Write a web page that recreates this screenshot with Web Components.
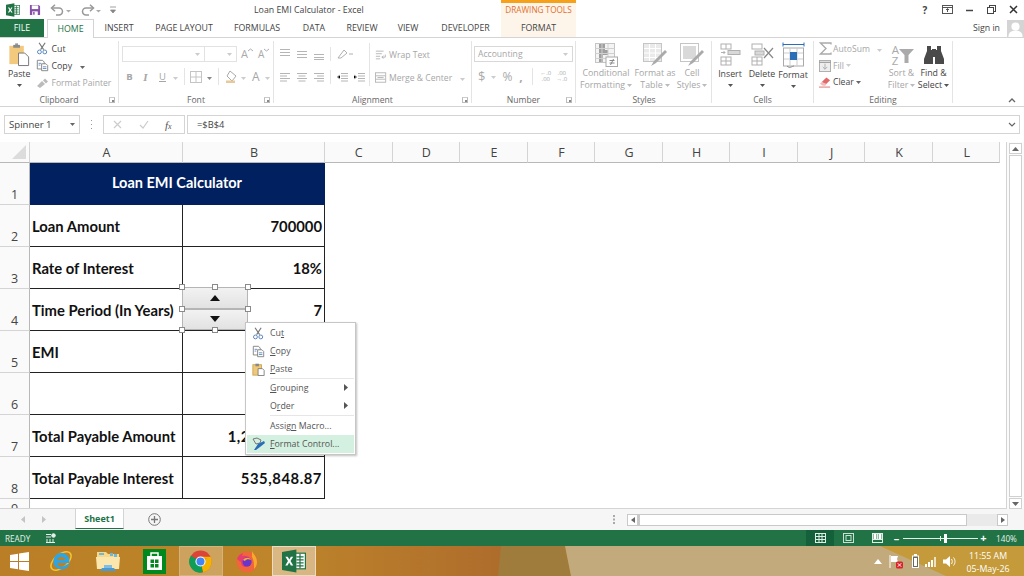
<!DOCTYPE html>
<html>
<head>
<meta charset="utf-8">
<title>Loan EMI Calculator - Excel</title>
<style>
  html, body { margin: 0; padding: 0; height: 576px; overflow: hidden; background: #fff; }
  body { display: flex; flex-direction: column; width: 1024px; font-family: "Open Sans", "Noto Sans", sans-serif; color: #444; }
</style>
</head>
<body>
<xl-titlebar></xl-titlebar>
<xl-tabs></xl-tabs>
<xl-ribbon></xl-ribbon>
<xl-formula-bar></xl-formula-bar>
<xl-sheet></xl-sheet>
<xl-sheet-tabs></xl-sheet-tabs>
<xl-status></xl-status>
<xl-taskbar></xl-taskbar>

<script>
const excelLogo = (w, h) => `<svg width="${w}" height="${h}" viewBox="0 0 20 20"><rect x="9" y="3.500" width="10.500" height="13" fill="#fff" stroke="#217346"/><path d="M12 6.500h6M12 9h6M12 11.500h6M12 14h6M15 4v12" stroke="#217346"/><path d="M0 2.500 12 .5v19L0 17.500z" fill="#217346"/><path d="M2.800 6.500h2l1.300 2.300L7.400 6.500h1.900L7.100 10l2.300 3.700H7.400L6 11.300l-1.400 2.400H2.700L5 10z" fill="#fff"/></svg>`;
const scissors = (c = '#5a87c0') => `<svg width="13" height="15" viewBox="0 0 17 17" fill="none"><path d="M4 1l6 9M12 1L6 10" stroke="#777" stroke-width="1.500"/><circle cx="4.500" cy="13" r="2.500" stroke="${c}" stroke-width="1.300"/><circle cx="11.500" cy="13" r="2.500" stroke="${c}" stroke-width="1.300"/></svg>`;
const copyIcon = `<svg width="13" height="13" viewBox="0 0 15 15" fill="#fff" stroke="#7a7a7a"><path d="M1.500 1.500h6l2 2v8h-8z"/><path d="M6.500 5.500h5l2 2v6h-7z"/><path d="M3 5h3M3 7h2M8 9h4M8 11h4" stroke="#5a87c0"/></svg>`;
const pasteSmall = `<svg width="13" height="13" viewBox="0 0 15 15"><rect x="1" y="2" width="10" height="12" fill="#f0c87a" stroke="#c9a256"/><rect x="4" y=".8" width="4" height="3" fill="#888"/><path d="M7 6.500h5l2 2v6H7z" fill="#fff" stroke="#777"/></svg>`;
const caret = (c = '#666') => `<svg width="5" height="3" viewBox="0 0 5 3"><path d="M0 0h5L2.500 3z" fill="${c}"/></svg>`;

class XlTitlebar extends HTMLElement {
  constructor() {
    super();
    this.attachShadow({mode: 'open'});
    this.shadowRoot.innerHTML = `
      <style>
        :host { display: flex; flex: none; height: 19px; align-items: center; font-size: 8.800px; color: #444; }
        .qat { display: flex; align-items: center; width: 254px; flex: none; padding-left: 6px; box-sizing: border-box; gap: 9px; }
        .title { width: 247px; flex: none; white-space: nowrap; }
        .band { width: 75px; flex: none; height: 19px; box-sizing: border-box; border-top: 3px solid #f6a11c; background: #fdf5ea; color: #e2702c; text-align: center; font-size: 8.200px; line-height: 14px; white-space: nowrap; }
        .win { margin-left: auto; display: flex; align-items: center; color: #444; }
        .win span { width: 22px; display: flex; justify-content: center; font-weight: 700; font-size: 10px; }
      </style>
      <div class="qat">
        ${excelLogo(14, 14)}
        <svg width="12" height="12" viewBox="0 0 13 13"><path d="M1 1h9.500L12 2.500V12H1z" fill="#8750a8"/><rect x="3" y="1.500" width="7" height="4" fill="#fff"/><rect x="3.500" y="8" width="6" height="4" fill="#fff"/><rect x="4.500" y="8.600" width="1.600" height="3" fill="#8750a8"/></svg>
        <svg width="24" height="12" viewBox="0 0 24 12" fill="none"><path d="M2 4h7a3.500 3.500 0 0 1 0 7H6" stroke="#999" stroke-width="1.500"/><path d="M5 .8 1.500 4 5 7.200" stroke="#999" stroke-width="1.500"/><path d="M16 6h5l-2.500 2.500z" fill="#aaa"/></svg>
        <svg style="margin-left:-3px" width="24" height="12" viewBox="0 0 24 12" fill="none"><path d="M13 4H6a3.500 3.500 0 0 0 0 7h3" stroke="#999" stroke-width="1.500"/><path d="M10 .8 13.500 4 10 7.200" stroke="#999" stroke-width="1.500"/><path d="M16 6h5l-2.500 2.500z" fill="#aaa"/></svg>
        <svg style="margin-left:-3px" width="6" height="8" viewBox="0 0 6 8"><path d="M0 1h6M.5 4h5l-2.500 3z" stroke="#888" fill="#888" stroke-width=".8"/></svg>
      </div>
      <div class="title">Loan EMI Calculator - Excel</div>
      <div class="band">DRAWING TOOLS</div>
      <div class="win">
        <span>?</span>
        <span><svg width="11" height="9" viewBox="0 0 11 9" fill="none" stroke="#555"><rect x=".5" y=".5" width="10" height="8"/><path d="M.5 2.500h10M5.500 7V4M4 5l1.500-1.500L7 5"/></svg></span>
        <span><svg width="9" height="9" viewBox="0 0 9 9"><path d="M1 5.500h7" stroke="#444" stroke-width="1.500"/></svg></span>
        <span><svg width="9" height="9" viewBox="0 0 9 9" fill="#fff" stroke="#444"><rect x="2.500" y=".5" width="6" height="6"/><rect x=".5" y="2.500" width="6" height="6"/></svg></span>
        <span><svg width="9" height="9" viewBox="0 0 9 9"><path d="M1 1l7 7M8 1 1 8" stroke="#333" stroke-width="1.500"/></svg></span>
      </div>`;
  }
}

class XlTabs extends HTMLElement {
  constructor() {
    super();
    this.attachShadow({mode: 'open'});
    const tabs = [['INSERT', 50], ['PAGE LAYOUT', 80], ['FORMULAS', 66], ['DATA', 48], ['REVIEW', 48], ['VIEW', 44], ['DEVELOPER', 71]];
    this.shadowRoot.innerHTML = `
      <style>
        :host { display: flex; flex: none; height: 18px; font-size: 8.800px; color: #444; align-items: stretch; }
        div { display: flex; align-items: center; justify-content: center; box-sizing: border-box; white-space: nowrap; }
        .file { width: 44px; background: #217346; color: #fff; margin-right: 3px; }
        .home { width: 47px; color: #217346; border: 1px solid #d4d4d4; border-bottom: 0; background: #fff; height: 19px; position: relative; z-index: 1; }
        .fmt { width: 75px; background: #fdf5ea; }
        .sign { margin-left: auto; gap: 7px; color: #444; }
      </style>
      <div class="file">FILE</div>
      <div class="home">HOME</div>
      ${tabs.map(([n, w]) => `<div style="width:${w}px">${n}</div>`).join('')}
      <div class="fmt">FORMAT</div>
      <div class="sign"><span style="font-size:8.800px">Sign in</span>
        <svg width="17" height="17" viewBox="0 0 18 18"><rect width="18" height="18" fill="#d4d4d4"/><circle cx="9" cy="7" r="4.300" fill="#fff"/><path d="M1.500 18c0-5 3-6.500 7.500-6.500S16.500 13 16.500 18z" fill="#fff"/></svg>
      </div>`;
  }
}

class XlGroup extends HTMLElement {
  constructor() {
    super();
    this.attachShadow({mode: 'open'});
    const launcher = this.hasAttribute('launcher');
    this.shadowRoot.innerHTML = `
      <style>
        :host { display: flex; flex-direction: column; flex: none; box-sizing: border-box; height: 62px; margin-top: 3px; border-right: 1px solid #e4e4e4; }
        .body { flex: none; height: 52px; margin-top: -2px; display: flex; }
        .label { flex: none; height: 12px; margin-top: 3px; display: flex; align-items: center; justify-content: center; position: relative; font-size: 8.600px; color: #666; }
        .launch { position: absolute; right: 3px; top: 3px; width: 6px; height: 6px; border: 1px solid #bbb; border-top-color: #ccc; box-sizing: border-box; }
        .launch::after { content: ''; position: absolute; right: 0; bottom: 0; width: 2px; height: 2px; background: #888; }
      </style>
      <div class="body"><slot></slot></div>
      <div class="label">${this.getAttribute('label')}${launcher ? '<span class="launch"></span>' : ''}</div>`;
  }
}

class XlBigButton extends HTMLElement {
  constructor() {
    super();
    this.attachShadow({mode: 'open'});
    const lines = (this.getAttribute('text') || '').split('|');
    const dim = this.hasAttribute('dim');
    this.shadowRoot.innerHTML = `
      <style>
        :host { display: flex; flex-direction: column; align-items: center; flex: none; font-size: 8.800px; line-height: 12px; color: ${dim ? '#a6a6a6' : '#444'}; white-space: nowrap; }
        .ico { height: 30px; box-sizing: border-box; padding-top: 3px; display: flex; align-items: center; justify-content: center; }
        .line { display: flex; align-items: center; gap: 2px; height: 12px; }
      </style>
      <div class="ico"><slot></slot></div>
      ${lines.map(l => `<div class="line">${l.replace('^', caret(dim ? '#bbb' : '#555'))}</div>`).join('')}`;
  }
}

class XlRibbon extends HTMLElement {
  constructor() {
    super();
    this.attachShadow({mode: 'open'});
    this.shadowRoot.innerHTML = `
      <style>
        :host { display: flex; flex: none; height: 70px; box-sizing: border-box; border-top: 1px solid #d4d4d4; border-bottom: 1px solid #d4d4d4; position: relative; font-size: 8.600px; color: #444; }
        .col { display: flex; flex-direction: column; }
        .row { display: flex; align-items: center; white-space: nowrap; gap: 4px; }
        .dim { color: #a6a6a6; }
        .box { height: 16px; border: 1px solid #e2e2e2; box-sizing: border-box; display: flex; align-items: center; justify-content: flex-end; padding: 0 4px; }
        .fg { font-size: 9.500px; font-weight: 700; color: #a6a6a6; width: 13px; text-align: center; }
        .sep { width: 1px; height: 17px; background: #e4e4e4; flex: none; }
        .aa { display: flex; align-items: flex-start; color: #aaa; line-height: 14px; }
        .collapse { position: absolute; right: 8px; bottom: 3px; }
        .az { display: flex; flex-direction: column; color: #aaa; font-size: 11.500px; line-height: 11px; }
      </style>

      <xl-group label="Clipboard" launcher style="width:119px">
        <xl-big-button text="Paste|^" style="margin:0 6px 0 8px">
          <svg width="22" height="25" viewBox="0 0 22 26"><rect x="1" y="4" width="15" height="19" fill="#f2c97d"/><path d="M5 3h7v3H5z" fill="#8a8a8a"/><path d="M7 1.500h3V3H7z" fill="#8a8a8a"/><path d="M10.500 11.500H17l4 4v9h-10.500z" fill="#fff" stroke="#777"/></svg>
        </xl-big-button>
        <div class="col" style="padding-top:1px">
          <div class="row" style="height:18px;gap:2px">${scissors()}<span style="font-size:8.800px">Cut</span></div>
          <div class="row" style="height:18px;gap:2px">${copyIcon}<span style="font-size:8.800px">Copy</span><span style="margin-left:6px">${caret()}</span></div>
          <div class="row dim" style="height:17px;gap:2px"><svg width="13" height="12" viewBox="0 0 13 12"><path d="M1 9l5-5 3 3-5 4zM7 3.500l2-2 3 3-2 2z" fill="#bbb"/></svg><span>Format Painter</span></div>
        </div>
      </xl-group>

      <xl-group label="Font" launcher style="width:155px">
        <div class="col" style="padding:7px 0 0 3px;gap:6px">
          <div class="row" style="gap:0">
            <div class="box" style="width:83px">${caret('#ccc')}</div>
            <div class="box" style="width:32px;border-left:0">${caret('#ccc')}</div>
            <span class="aa" style="margin-left:4px;font-size:11px">A<svg width="5" height="4" viewBox="0 0 5 4" fill="none" stroke="#aaa" style="margin-top:1px"><path d="M0 3l2.500-2L5 3"/></svg></span>
            <span class="aa" style="margin-left:5px;font-size:10px">A<svg width="5" height="4" viewBox="0 0 5 4" fill="none" stroke="#aaa" style="margin-top:1px"><path d="M0 1l2.500 2L5 1"/></svg></span>
          </div>
          <div class="row" style="gap:0;height:17px;padding-left:1px">
            <span class="fg">B</span>
            <span class="fg" style="margin-left:3px;font-style:italic;font-family:'Liberation Serif',serif;font-size:11px">I</span>
            <span class="fg" style="margin-left:4px;text-decoration:underline;font-weight:400">U</span>
            <span style="margin:0 6px 0 4px">${caret('#ccc')}</span>
            <span class="sep"></span>
            <svg style="margin-left:5px" width="12" height="12" viewBox="0 0 12 12" fill="none" stroke="#c4c4c4"><rect x=".5" y=".5" width="11" height="11"/><path d="M6 1v10M1 6h10"/></svg>
            <span style="margin:0 6px 0 5px">${caret('#888')}</span>
            <span class="sep"></span>
            <svg style="margin-left:6px" width="13" height="13" viewBox="0 0 13 13"><path d="M5 1l6 5-4 5-5-5z" fill="none" stroke="#aaa"/><rect x="1" y="10.500" width="9" height="2.500" fill="#e7c99a"/></svg>
            <span style="margin:0 6px 0 3px">${caret('#ccc')}</span>
            <span style="font-size:12px;color:#a6a6a6">A</span>
            <span style="margin-left:5px">${caret('#ccc')}</span>
          </div>
        </div>
      </xl-group>

      <xl-group label="Alignment" launcher style="width:198px">
        <div class="col" style="padding:7px 0 0 5px;gap:8px;width:95px;box-sizing:border-box">
          <div class="row" style="gap:5px;height:15px">
            <svg width="12" height="12" viewBox="0 0 12 12" stroke="#b5b5b5"><path d="M1 1.500h10M1 4.500h10M1 7.500h10"/></svg>
            <svg width="12" height="12" viewBox="0 0 12 12" stroke="#b5b5b5"><path d="M1 3.500h10M1 6.500h10M1 9.500h10"/></svg>
            <svg width="12" height="12" viewBox="0 0 12 12" stroke="#b5b5b5"><path d="M1 6.500h10M1 9.500h10M1 11.500h10"/></svg>
            <span class="sep" style="height:14px"></span>
            <svg width="20" height="12" viewBox="0 0 20 12" fill="none" stroke="#b0b0b0"><path d="M2 10 8 2l3 3-6 5zM13 6h4"/></svg>
          </div>
          <div class="row" style="gap:5px;height:15px">
            <svg width="12" height="12" viewBox="0 0 12 12" stroke="#b5b5b5"><path d="M1 2.500h10M1 5h7M1 7.500h10M1 10h7"/></svg>
            <svg width="12" height="12" viewBox="0 0 12 12" stroke="#b5b5b5"><path d="M1 2.500h10M2.500 5h7M1 7.500h10M2.500 10h7"/></svg>
            <svg width="12" height="12" viewBox="0 0 12 12" stroke="#b5b5b5"><path d="M1 2.500h10M4 5h7M1 7.500h10M4 10h7"/></svg>
            <span class="sep" style="height:14px"></span>
            <svg width="12" height="12" viewBox="0 0 12 12" stroke="#b5b5b5"><path d="M5 2.500h7M5 5h7M5 7.500h7M5 10h7M4 4 1 6l3 2"/></svg>
            <svg width="12" height="12" viewBox="0 0 12 12" stroke="#b5b5b5"><path d="M5 2.500h7M5 5h7M5 7.500h7M5 10h7M1 4l3 2-3 2"/></svg>
          </div>
        </div>
        <span class="sep" style="height:43px;margin:4px 5px 0 0"></span>
        <div class="col dim" style="padding-top:8px;gap:8px">
          <div class="row" style="height:15px;gap:2px"><svg width="12" height="12" viewBox="0 0 14 12" fill="none" stroke="#b0b0b0"><path d="M1 1.500h9M1 4.500h7M1 7.500h5M1 10.500h5M8 8.500h4V5.500M10 7l-2 1.500 2 1.500"/></svg>Wrap Text</div>
          <div class="row" style="height:15px;gap:2px"><svg width="12" height="13" viewBox="0 0 14 13" fill="none" stroke="#b0b0b0"><rect x=".5" y="1" width="12" height="11"/><path d="M1 4.500h11M1 8.500h11M3 6.500h7"/></svg>Merge &amp; Center<span style="margin-left:6px">${caret('#ccc')}</span></div>
        </div>
      </xl-group>

      <xl-group label="Number" launcher style="width:104px">
        <div class="col" style="padding:7px 0 0 2px;gap:4px">
          <div class="box dim" style="width:99px;justify-content:space-between;border-color:#d8d8d8;padding-left:3px">Accounting ${caret('#ccc')}</div>
          <div class="row" style="gap:0;height:20px;color:#aaa;padding-left:4px">
            <span style="font-size:13px">$</span><span style="margin:0 6px 0 6px">${caret('#ccc')}</span>
            <span style="font-size:12px">%</span><span style="margin-left:7px;font-size:12px;font-weight:700">,</span>
            <span class="sep" style="margin:0 5px 0 9px"></span>
            <span style="font-size:6px;line-height:6px;width:16px;text-align:center">←.0<br>.00</span>
            <span style="font-size:6px;line-height:6px;width:16px;text-align:center">.00<br>→.0</span>
          </div>
        </div>
      </xl-group>

      <xl-group label="Styles" style="width:136px;padding-left:1px">
        <xl-big-button dim text="Conditional|Formatting ^" style="width:52px;margin-left:3px">
          <svg width="23" height="24" viewBox="0 0 23 24"><rect x=".5" y=".5" width="19" height="19" fill="#f4f4f4" stroke="#c5c5c5"/><path d="M4 1h6v6h3v5H8v7H4z" fill="#9f9f9f"/><path d="M.5 5.500h19M.5 10.500h19M.5 15.500h19M7 1v18M13 1v18" stroke="#d0d0d0"/><rect x="11" y="14" width="11.500" height="9.500" fill="#fff" stroke="#aaa"/><path d="M14.500 17.500h5M14.500 20h5M18.500 16l-3 6" stroke="#888"/></svg>
        </xl-big-button>
        <xl-big-button dim text="Format as|Table ^" style="width:44px;margin-left:1px">
          <svg width="24" height="24" viewBox="0 0 24 24"><rect x=".5" y=".5" width="18" height="18" fill="#eaeaea" stroke="#c5c5c5"/><path d="M1 5.500h17M1 10h17M1 14.500h17M6.500 1v17M12.500 1v17" stroke="#fff"/><path d="M22 7 11 18l-3 5 5-3L24 9z" fill="#aaa"/></svg>
        </xl-big-button>
        <xl-big-button dim text="Cell|Styles ^" style="width:32px;margin-left:-1px">
          <svg width="24" height="24" viewBox="0 0 24 24"><rect x=".5" y=".5" width="18" height="18" fill="#fff" stroke="#c5c5c5"/><rect x="3" y="3" width="13" height="13" fill="#d9d9d9"/><path d="M22 7 11 18l-3 5 5-3L24 9z" fill="#aaa"/></svg>
        </xl-big-button>
      </xl-group>

      <xl-group label="Cells" style="width:102px">
        <xl-big-button text="Insert|^" style="width:30px;margin-left:3px">
          <svg width="21" height="23" viewBox="0 0 21 23" fill="none" stroke="#b0b0b0"><rect x="1" y="1" width="10" height="5"/><path d="M6 1v5M1 9.500h4l-1.500-1.500M3.500 11 5 9.500"/><rect x="8" y="7.500" width="12" height="4" fill="#d9d9d9"/><rect x="1" y="14" width="10" height="8"/><path d="M6 14v8M1 18h10"/></svg>
        </xl-big-button>
        <xl-big-button text="Delete|^" style="width:32px;margin-left:1px">
          <svg width="23" height="23" viewBox="0 0 23 23" fill="none" stroke="#b0b0b0"><rect x="1" y="1" width="10" height="5"/><rect x="4" y="8" width="9" height="4" fill="#d9d9d9"/><rect x="1" y="14" width="10" height="8"/><path d="M6 14v8M1 18h10"/><path d="M13 5l9 10M22 5l-9 10" stroke="#888" stroke-width="1.200"/></svg>
        </xl-big-button>
        <xl-big-button text="Format|^" style="width:30px">
          <svg width="23" height="27" viewBox="0 0 23 27" fill="none"><path d="M1 2.500h21M1 .5v4M22 .5v4" stroke="#2a6eb8"/><rect x="1.500" y="6" width="20" height="18" stroke="#aaa"/><path d="M2 11h19M2 17h19M8 6v18M15 6v18" stroke="#ccc"/><rect x="8" y="10" width="7" height="8" fill="#2a6eb8"/><path d="M5 24c3 3 5 0 7 0" stroke="#888"/></svg>
        </xl-big-button>
      </xl-group>

      <xl-group label="Editing" style="width:139px">
        <div class="col" style="padding:1px 0 0 5px;width:73px;box-sizing:border-box">
          <div class="row dim" style="height:18px;gap:1px"><svg width="13" height="13" viewBox="0 0 13 13" fill="none"><path d="M12 2.500V1H1.500L7 6.500 1.500 12H12v-1.500" stroke="#aaa" stroke-width="1.300"/></svg>AutoSum<span style="margin-left:6px">${caret('#ccc')}</span></div>
          <div class="row dim" style="height:17px;gap:2px"><svg width="12" height="12" viewBox="0 0 13 13" fill="none" stroke="#aaa"><rect x=".5" y=".5" width="12" height="12" fill="#eee"/><path d="M.5 2.500h12" stroke="#888"/><path d="M6.500 4v6M4 7.500l2.500 2.500L9 7.500"/></svg>Fill ${caret('#ccc')}</div>
          <div class="row" style="height:18px;gap:2px"><svg width="12" height="12" viewBox="0 0 13 12"><path d="M3 6l5-5 4 3-5 5z" fill="#e06a6a"/><path d="M3 6 1 8l3 2h3l1-2z" fill="#f2bcbc"/><path d="M0 11.500h12" stroke="#e06a6a"/></svg>Clear ${caret()}</div>
        </div>
        <xl-big-button dim text="Sort &amp;|Filter ^" style="width:29px">
          <div class="row" style="gap:0;margin-left:3px"><span class="az"><span>A</span><span>Z</span></span><svg width="15" height="14" viewBox="0 0 15 14" style="margin-top:3px"><path d="M0 0h15L9.500 6v8h-4V6z" fill="#aaa"/></svg></div>
        </xl-big-button>
        <xl-big-button text="Find &amp;|Select ^" style="width:31px;margin-left:2px">
          <svg width="22" height="20" viewBox="0 0 22 20"><path d="M4 1h4v4h1v-1h4v1h1V1h4v5l3 8v5h-9v-7h-2v7H1v-5l3-8z" fill="#4a4a4a"/></svg>
        </xl-big-button>
      </xl-group>
      <svg class="collapse" width="8" height="5" viewBox="0 0 8 5" fill="none"><path d="M1 4l3-3 3 3" stroke="#666" stroke-width="1.300"/></svg>`;
  }
}

class XlFormulaBar extends HTMLElement {
  constructor() {
    super();
    this.attachShadow({mode: 'open'});
    this.shadowRoot.innerHTML = `
      <style>
        :host { display: flex; flex: none; height: 35px; box-sizing: border-box; padding: 8px 4px; align-items: stretch; font-size: 9.300px; color: #444; }
        div { box-sizing: border-box; border: 1px solid #d4d4d4; display: flex; align-items: center; white-space: nowrap; }
        .name { width: 76px; padding: 0 4px; justify-content: space-between; font-size: 9.600px; }
        .dots { border: 0; width: 23px; justify-content: center; }
        .fx { width: 82px; padding-left: 9px; margin-right: 2px; }
        .val { flex: 1; padding: 0 3px 0 9px; justify-content: space-between; }
      </style>
      <div class="name">Spinner 1 ${caret('#666')}</div>
      <div class="dots"><svg width="3" height="9" viewBox="0 0 3 9" fill="#999"><rect x="1" y="0" width="1" height="1"/><rect x="1" y="4" width="1" height="1"/><rect x="1" y="8" width="1" height="1"/></svg></div>
      <div class="fx">
        <svg width="9" height="9" viewBox="0 0 9 9"><path d="M1 1l7 7M8 1 1 8" stroke="#ccc" stroke-width="1.200"/></svg>
        <svg style="margin-left:17px" width="10" height="9" viewBox="0 0 10 9" fill="none"><path d="M1 5l3 3 5-7" stroke="#ccc" stroke-width="1.200"/></svg>
        <span style="margin-left:16px;font-family:'Liberation Serif',serif;font-style:italic;font-size:11px;color:#555">f<span style="font-size:8px">x</span></span>
      </div>
      <div class="val">=$B$4
        <svg width="8" height="5" viewBox="0 0 8 5" fill="none"><path d="M1 1l3 3 3-3" stroke="#666" stroke-width="1.200"/></svg>
      </div>`;
  }
}

class XlCell extends HTMLElement {
  constructor() {
    super();
    this.attachShadow({mode: 'open'});
    this.shadowRoot.innerHTML = `
      <style>
        :host { display: flex; align-items: center; box-sizing: border-box; height: 42px; border-right: 1px solid #222; border-bottom: 1px solid #222; padding: 0 2px; font-family: Lato, "Open Sans", sans-serif; font-weight: 700; font-size: 14.800px; color: #111; white-space: nowrap; overflow: hidden; }
        :host([right]) { justify-content: flex-end; }
        :host([money]) { letter-spacing: .55px; }
        :host([head]) { grid-column: span 2; background: #002060; color: #fff; justify-content: center; border-color: #002060; padding-bottom: 2px; font-size: 14.500px; }
      </style>
      <slot></slot>`;
  }
}

class XlSheet extends HTMLElement {
  constructor() {
    super();
    this.attachShadow({mode: 'open'});
    const cols = 'ABCDEFGHIJKL'.split('');
    const rows = [
      ['<xl-cell head>Loan EMI Calculator</xl-cell>'],
      ['<xl-cell>Loan Amount</xl-cell>', '<xl-cell right>700000</xl-cell>'],
      ['<xl-cell>Rate of Interest</xl-cell>', '<xl-cell right>18%</xl-cell>'],
      ['<xl-cell>Time Period (In Years)</xl-cell>', '<xl-cell right>7</xl-cell>'],
      ['<xl-cell>EMI</xl-cell>', '<xl-cell right></xl-cell>'],
      ['<xl-cell></xl-cell>', '<xl-cell right></xl-cell>'],
      ['<xl-cell>Total Payable Amount</xl-cell>', '<xl-cell right money>1,235,848.87</xl-cell>'],
      ['<xl-cell>Total Payable Interest</xl-cell>', '<xl-cell right money>535,848.87</xl-cell>']
    ];
    const handles = [[0, 0], [50, 0], [100, 0], [0, 50], [100, 50], [0, 100], [50, 100], [100, 100]];
    this.shadowRoot.innerHTML = `
      <style>
        :host { display: flex; flex: none; height: 367px; position: relative; overflow: hidden; }
        .grid { display: grid; grid-template-columns: 30px 153px 142px repeat(10, 67.550px); grid-template-rows: 21px repeat(8, 42px) 10px; width: 1007px; flex: none; overflow: hidden; align-content: start; border-right: 1px solid #d4d4d4; border-bottom: 1px solid #d4d4d4; box-sizing: border-box; }
        .ch, .rh { background: #fafafa; color: #444; font-size: 12.500px; box-sizing: border-box; display: flex; }
        .ch { align-items: center; justify-content: center; border-right: 1px solid #d4d4d4; border-bottom: 1px solid #b8b8b8; padding: 1px 0 0 1px; }
        .rh { align-items: flex-end; justify-content: center; border-right: 1px solid #b8b8b8; border-bottom: 1px solid #d4d4d4; padding-bottom: 1px; }
        .rh.cut { align-items: flex-start; padding: 4px 0 0; border-bottom: 0; overflow: hidden; line-height: 12px; }
        .corner { background: #fafafa; border-right: 1px solid #d4d4d4; border-bottom: 1px solid #b8b8b8; box-sizing: border-box; display: flex; align-items: flex-end; justify-content: flex-end; padding: 0 3px 3px 0; }
        .fill { grid-column: 4 / -1; }
        .vbar { flex: 1; display: flex; flex-direction: column; padding: 1px 2px 0 2px; gap: 1px; background: #fbfbfb; }
        .vbar div { background: #fff; border: 1px solid #d0d0d0; box-sizing: border-box; display: flex; align-items: center; justify-content: center; }
        .vbar .arr { height: 11px; flex: none; }
        .vbar .thumb { flex: 1; }

        /* shape sitting over the cells */
        .spinner { position: absolute; left: 182px; top: 145px; width: 66px; height: 43px; display: flex; flex-direction: column; }
        .spin { flex: 1; background: linear-gradient(#f2f2f2, #e2e2e2); border: 1px solid #b5b5b5; display: flex; align-items: center; justify-content: center; box-sizing: border-box; }
        .h { position: absolute; width: 6px; height: 6px; background: #fff; border: 1px solid #8a8a8a; box-sizing: border-box; transform: translate(-50%, -50%); }
        xl-context-menu { position: absolute; left: 245px; top: 180px; }
      </style>
      <div class="grid">
        <div class="corner"><svg width="14" height="14" viewBox="0 0 14 14"><path d="M14 0v14H0z" fill="#dcdcdc"/></svg></div>
        ${cols.map(c => `<div class="ch">${c}</div>`).join('')}
        ${rows.map((r, i) => `<div class="rh">${i + 1}</div>${r.join('')}<div class="fill"></div>`).join('')}
        <div class="rh cut">9</div>
      </div>
      <div class="vbar">
        <div class="arr"><svg width="7" height="4" viewBox="0 0 7 4"><path d="M0 4 3.500 0 7 4z" fill="#666"/></svg></div>
        <div class="thumb"></div>
        <div class="arr"><svg width="7" height="4" viewBox="0 0 7 4"><path d="M0 0h7L3.500 4z" fill="#666"/></svg></div>
      </div>
      <div class="spinner">
        <div class="spin"><svg width="10" height="6" viewBox="0 0 10 6"><path d="M0 6 5 0l5 6z" fill="#111"/></svg></div>
        <div class="spin"><svg width="10" height="6" viewBox="0 0 10 6"><path d="M0 0l5 6 5-6z" fill="#111"/></svg></div>
        ${handles.map(([x, y]) => `<span class="h" style="left:${x}%;top:${y}%"></span>`).join('')}
      </div>
      <xl-context-menu></xl-context-menu>`;
  }
}

class XlContextMenu extends HTMLElement {
  constructor() {
    super();
    this.attachShadow({mode: 'open'});
    const item = (icon, html, o = {}) => `<div class="item${o.on ? ' on' : ''}"><span class="i">${icon}</span><span>${html}</span>${o.sub ? '<svg class="sub" width="4" height="7" viewBox="0 0 4 7"><path d="M0 0l4 3.500L0 7z" fill="#555"/></svg>' : ''}</div>`;
    this.shadowRoot.innerHTML = `
      <style>
        :host { display: block; width: 111px; box-sizing: border-box; background: #fff; border: 1px solid #c6c6c6; box-shadow: 1px 1px 2px rgba(0,0,0,.25); padding: 1px; font-size: 8.800px; color: #555; }
        .item { height: 18px; display: flex; align-items: center; position: relative; white-space: nowrap; }
        .on { background: #d3f0e0; }
        .i { width: 23px; display: flex; justify-content: center; flex: none; }
        u { text-underline-offset: 1px; }
        .sub { position: absolute; right: 6px; top: 5px; }
        .s { height: 1px; background: #e6e6e6; margin: 0 0 0 23px; }
      </style>
      ${item(scissors(), 'Cu<u>t</u>')}
      ${item(copyIcon, '<u>C</u>opy')}
      ${item(pasteSmall, '<u>P</u>aste')}
      <div class="s"></div>
      ${item('', '<u>G</u>rouping', {sub: 1})}
      ${item('', 'O<u>r</u>der', {sub: 1})}
      <div class="s" style="margin-bottom:1px"></div>
      ${item('', 'Assig<u>n</u> Macro...')}
      ${item('<svg width="15" height="14" viewBox="0 0 15 14"><path d="M2 2l4-1 4 2-1 3-4 1z" fill="none" stroke="#777"/><path d="M7 7l6-3 1 2-5 4-4 3H3z" fill="#2a6eb8"/></svg>', '<u>F</u>ormat Control...', {on: 1})}`;
  }
}

class XlSheetTabs extends HTMLElement {
  constructor() {
    super();
    this.attachShadow({mode: 'open'});
    this.shadowRoot.innerHTML = `
      <style>
        :host { display: flex; flex: none; height: 21px; background: #f6f6f6; align-items: stretch; }
        .nav { width: 75px; display: flex; align-items: center; padding-left: 21px; gap: 17px; box-sizing: border-box; flex: none; }
        .tab { width: 49px; flex: none; background: #fff; border: 1px solid #d4d4d4; border-top: 0; border-bottom: 1px solid #217346; box-sizing: border-box; color: #217346; font-weight: 700; font-size: 9px; display: flex; align-items: center; justify-content: center; height: 20px; }
        .add { margin-left: 24px; display: flex; align-items: center; flex: none; }
        .dots { margin-left: auto; display: flex; align-items: center; margin-right: 11px; }
        .sb { display: flex; align-items: center; width: 381px; flex: none; margin-right: 16px; }
        .arrow { width: 11px; height: 12px; background: #fff; border: 1px solid #c9c9c9; box-sizing: border-box; display: flex; align-items: center; justify-content: center; flex: none; }
        .track { flex: 1; height: 12px; display: flex; background: #eaeaea; }
        .thumb { width: 329px; background: #fff; border: 1px solid #c9c9c9; border-left-width: 2px; box-sizing: border-box; }
      </style>
      <div class="nav">
        <svg width="4" height="7" viewBox="0 0 4 7"><path d="M4 0v7L0 3.500z" fill="#c4c4c4"/></svg>
        <svg width="4" height="7" viewBox="0 0 4 7"><path d="M0 0v7l4-3.500z" fill="#c4c4c4"/></svg>
      </div>
      <div class="tab">Sheet1</div>
      <div class="add"><svg width="13" height="13" viewBox="0 0 13 13" fill="none" stroke="#777"><circle cx="6.500" cy="6.500" r="5.800"/><path d="M6.500 3v7M3 6.500h7" stroke-width="1.300"/></svg></div>
      <div class="dots"><svg width="3" height="9" viewBox="0 0 3 9" fill="#aaa"><rect x="0" y="0" width="2" height="2"/><rect x="0" y="3.500" width="2" height="2"/><rect x="0" y="7" width="2" height="2"/></svg></div>
      <div class="sb">
        <div class="arrow"><svg width="4" height="6" viewBox="0 0 4 6"><path d="M4 0v6L0 3z" fill="#666"/></svg></div>
        <div class="track"><div class="thumb"></div></div>
        <div class="arrow"><svg width="4" height="6" viewBox="0 0 4 6"><path d="M0 0v6l4-3z" fill="#666"/></svg></div>
      </div>`;
  }
}

class XlStatus extends HTMLElement {
  constructor() {
    super();
    this.attachShadow({mode: 'open'});
    this.shadowRoot.innerHTML = `
      <style>
        :host { display: flex; flex: none; height: 16px; background: #217346; color: #e6f0ea; font-size: 8.200px; align-items: center; padding-left: 5px; box-sizing: border-box; }
        .macro { margin-left: 15px; display: flex; }
        .right { margin-left: auto; display: flex; align-items: center; height: 16px; }
        .v { width: 28px; height: 16px; display: flex; align-items: center; justify-content: center; }
        .v.on { background: #14603a; }
        .slider { width: 75px; height: 1px; background: #e6f0ea; position: relative; margin: 0 1px 0 2px; }
        .thumb { position: absolute; left: 41px; top: -4px; width: 3px; height: 9px; background: #fff; }
        .tick { position: absolute; left: 37px; top: -2px; width: 1px; height: 5px; background: #e6f0ea; }
        .pm { font-size: 11px; font-weight: 700; line-height: 16px; width: 9px; text-align: center; color: #fff; }
        .pct { width: 35px; text-align: center; margin-left: 1px; }
      </style>
      <span>READY</span>
      <span class="macro"><svg width="11" height="10" viewBox="0 0 11 10" fill="none" stroke="#e6f0ea"><path d="M1 1.500h5M1 9.500h9M2 6v3M5 6v3M8 6v3"/><circle cx="8.500" cy="2.500" r="1.800" fill="#e6f0ea"/><path d="M1 4h5"/></svg></span>
      <div class="right">
        <div class="v on"><svg width="11" height="10" viewBox="0 0 11 10" fill="none" stroke="#dfeee6"><rect x=".5" y=".5" width="10" height="9"/><path d="M4 1v8M7 1v8M1 3.500h9M1 6.500h9"/></svg></div>
        <div class="v"><svg width="11" height="10" viewBox="0 0 11 10" fill="none" stroke="#cde0d5"><rect x=".5" y=".5" width="10" height="9"/><rect x="3" y="2.500" width="5" height="5"/></svg></div>
        <div class="v" style="width:30px"><svg width="11" height="10" viewBox="0 0 11 10" fill="none" stroke="#dfeee6"><rect x=".5" y=".5" width="10" height="9"/><path d="M5.500 1v5M1 6.500h9"/><rect x="1.500" y="1" width="3" height="5" fill="#fff" stroke="none"/><rect x="6.500" y="1" width="3" height="5" fill="#fff" stroke="none"/></svg></div>
        <span class="pm">–</span>
        <div class="slider"><span class="tick"></span><span class="thumb"></span></div>
        <span class="pm">+</span>
        <span class="pct">140%</span>
      </div>`;
  }
}

class XlTaskbar extends HTMLElement {
  constructor() {
    super();
    this.attachShadow({mode: 'open'});
    const chrome = `<svg width="23" height="23" viewBox="0 0 24 24"><circle cx="12" cy="12" r="11.500" fill="#db4437"/><path d="M12 12 22.500 7a11.500 11.500 0 0 1-8 16.300z" fill="#f4b400"/><path d="M12 12 14.500 23.300A11.500 11.500 0 0 1 2 6z" fill="#0f9d58"/><path d="M12 7h10.500l-1 2H12z" fill="#f4b400"/><circle cx="12" cy="12" r="5.300" fill="#fff"/><circle cx="12" cy="12" r="4.200" fill="#4285f4"/></svg>`;
    const firefox = `<svg width="24" height="24" viewBox="0 0 24 24"><circle cx="12" cy="13" r="10.500" fill="#f0653a"/><path d="M17 2c1 3 5 5 5 11 0 3-1 5-3 7 0-5 0-9-2-12z" fill="#f7a92b"/><path d="M2 10c1-3 3-5 6-6l-1 3c3-1 7 0 9 3 2 4-1 8-5 8-3 0-5-2-5-5z" fill="#e5357a" opacity=".85"/><circle cx="12" cy="13" r="4.500" fill="#6a35c9"/><path d="M8 11c2-3 7-3 8 0-2-1-5-1-6 1z" fill="#f7a92b"/></svg>`;
    const ie = `<svg width="24" height="24" viewBox="0 0 24 24" fill="none"><ellipse cx="12" cy="12" rx="12" ry="6.500" transform="rotate(-40 12 12)" stroke="#f4c430" stroke-width="1.500"/><path d="M4.500 13a8 8 0 0 1 15.800-2.500V14H8c.5 4 6 5 9.500 1.500h3c-3 7-15 6.500-16-2.500zM8 11h8.500c-.5-4-7.500-4-8.500 0z" fill="#2aa6e8"/></svg>`;
    const folder = `<svg width="24" height="22" viewBox="0 0 24 22"><path d="M1 2h9l2 2h11v15H1z" fill="#f7d98a"/><path d="M3 3h5v2H3zM14 3h3v3h-3zM18 4h3v3h-3z" fill="#6db6e0"/><path d="M0 7h24l-1 12H1z" fill="#fbe7ad"/><path d="M6 18h12l2 3H4z" fill="#4a9bd4"/><path d="M8 15h8v3H8z" fill="#7fbde6"/></svg>`;
    const store = `<svg width="23" height="25" viewBox="0 0 23 25"><rect width="23" height="25" fill="#00891f"/><path d="M4 7h15v14H4z" fill="#fff"/><path d="M8 7V4h7v3" fill="none" stroke="#fff" stroke-width="1.500"/><path d="M7.500 10.500h3.500v3.500H7.500zM12 10.500h3.500v3.500H12zM7.500 15H11v3.500H7.500zM12 15h3.500v3.500H12z" fill="#00891f"/></svg>`;
    this.shadowRoot.innerHTML = `
      <style>
        :host { display: flex; flex: none; height: 30px; position: relative; align-items: stretch; overflow: hidden; background: #bd7f22; }
        .bg { position: absolute; left: 0; top: 0; }
        .apps, .tray { display: flex; align-items: center; position: relative; }
        .app { width: 44px; height: 30px; display: flex; align-items: center; justify-content: center; flex: none; margin-right: 2.500px; box-sizing: border-box; }
        .start { width: 38px; display: flex; align-items: center; justify-content: center; flex: none; margin-right: 1px; }
        .hl { background: rgba(255,255,255,.25); border: 1px solid rgba(255,255,255,.18); }
        .active { background: rgba(255,255,255,.42); border: 1px solid rgba(255,255,255,.5); }
        .tray { margin-left: auto; padding-right: 13px; color: #fff; font-size: 8.800px; }
        .clock { text-align: center; line-height: 13px; margin-left: 9px; margin-top: 4px; width: 46px; white-space: nowrap; }
      </style>
      <svg class="bg" width="1024" height="30" viewBox="0 0 1024 30">
        <defs><linearGradient id="o" x1="0" x2="1" y1="0" y2="0"><stop offset="0" stop-color="#ba7f26"/><stop offset=".55" stop-color="#be852a"/><stop offset="1" stop-color="#ae6c2c"/></linearGradient></defs>
        <rect width="505" height="30" fill="url(#o)"/>
        <path d="M501 0h64l6 30h-73z" fill="#a07c3c"/>
        <path d="M565 0h459v30H571z" fill="#c2aa7c"/>
        <path d="M880 0h144v30h-78z" fill="#c49a3a"/>
      </svg>
      <div class="apps">
        <div class="start"><svg width="19" height="19" viewBox="0 0 19 19" fill="#fff"><path d="M0 3l8-1.200V9H0zM9 1.600 19 0v9H9zM0 10h8v7.200L0 16zM9 10h10v9L9 17.400z"/></svg></div>
        <div class="app">${ie}</div>
        <div class="app">${folder}</div>
        <div class="app">${store}</div>
        <div class="app hl">${chrome}</div>
        <div class="app">${firefox}</div>
        <div class="app active">${excelLogo(24, 24)}</div>
      </div>
      <div class="tray">
        <svg width="8" height="5" viewBox="0 0 8 5" style="margin-right:7px"><path d="M0 5 4 0l4 5z" fill="#fff"/></svg>
        <svg width="14" height="15" viewBox="0 0 14 15" style="margin-right:9px"><path d="M1 1v13" stroke="#fff"/><path d="M2 2h7l-1 3 1 3H2z" fill="#fff"/><rect x="7" y="7.500" width="7" height="7" rx="1.500" fill="#d8232a"/><path d="M8.800 9.300l3.400 3.400M12.200 9.300l-3.400 3.400" stroke="#fff"/></svg>
        <svg width="7" height="14" viewBox="0 0 7 14" style="margin-right:6px"><rect x="2" y="0" width="3" height="2" fill="#fff"/><rect x=".5" y="2" width="6" height="11.500" fill="#6b6b5a" stroke="#fff"/><rect x="2" y="4" width="3" height="8" fill="#fff"/></svg>
        <svg width="13" height="12" viewBox="0 0 13 12" style="margin-right:5px" fill="#fff"><rect x="0" y="9" width="2" height="3"/><rect x="3" y="7" width="2" height="5"/><rect x="6" y="5" width="2" height="7"/><rect x="9" y="2" width="2" height="10" opacity=".7"/></svg>
        <svg width="13" height="13" viewBox="0 0 13 13" fill="none"><path d="M0 4.500h3L7 1v11L3 8.500H0z" fill="#fff"/><path d="M8.500 4c1 1.500 1 3.500 0 5M10.500 2.500c2 2.500 2 5.500 0 8" stroke="#fff"/></svg>
        <div class="clock">11:55 AM<br>05-May-26</div>
      </div>`;
  }
}

customElements.define('xl-titlebar', XlTitlebar);
customElements.define('xl-tabs', XlTabs);
customElements.define('xl-group', XlGroup);
customElements.define('xl-big-button', XlBigButton);
customElements.define('xl-ribbon', XlRibbon);
customElements.define('xl-formula-bar', XlFormulaBar);
customElements.define('xl-cell', XlCell);
customElements.define('xl-context-menu', XlContextMenu);
customElements.define('xl-sheet', XlSheet);
customElements.define('xl-sheet-tabs', XlSheetTabs);
customElements.define('xl-status', XlStatus);
customElements.define('xl-taskbar', XlTaskbar);
</script>
</body>
</html>
